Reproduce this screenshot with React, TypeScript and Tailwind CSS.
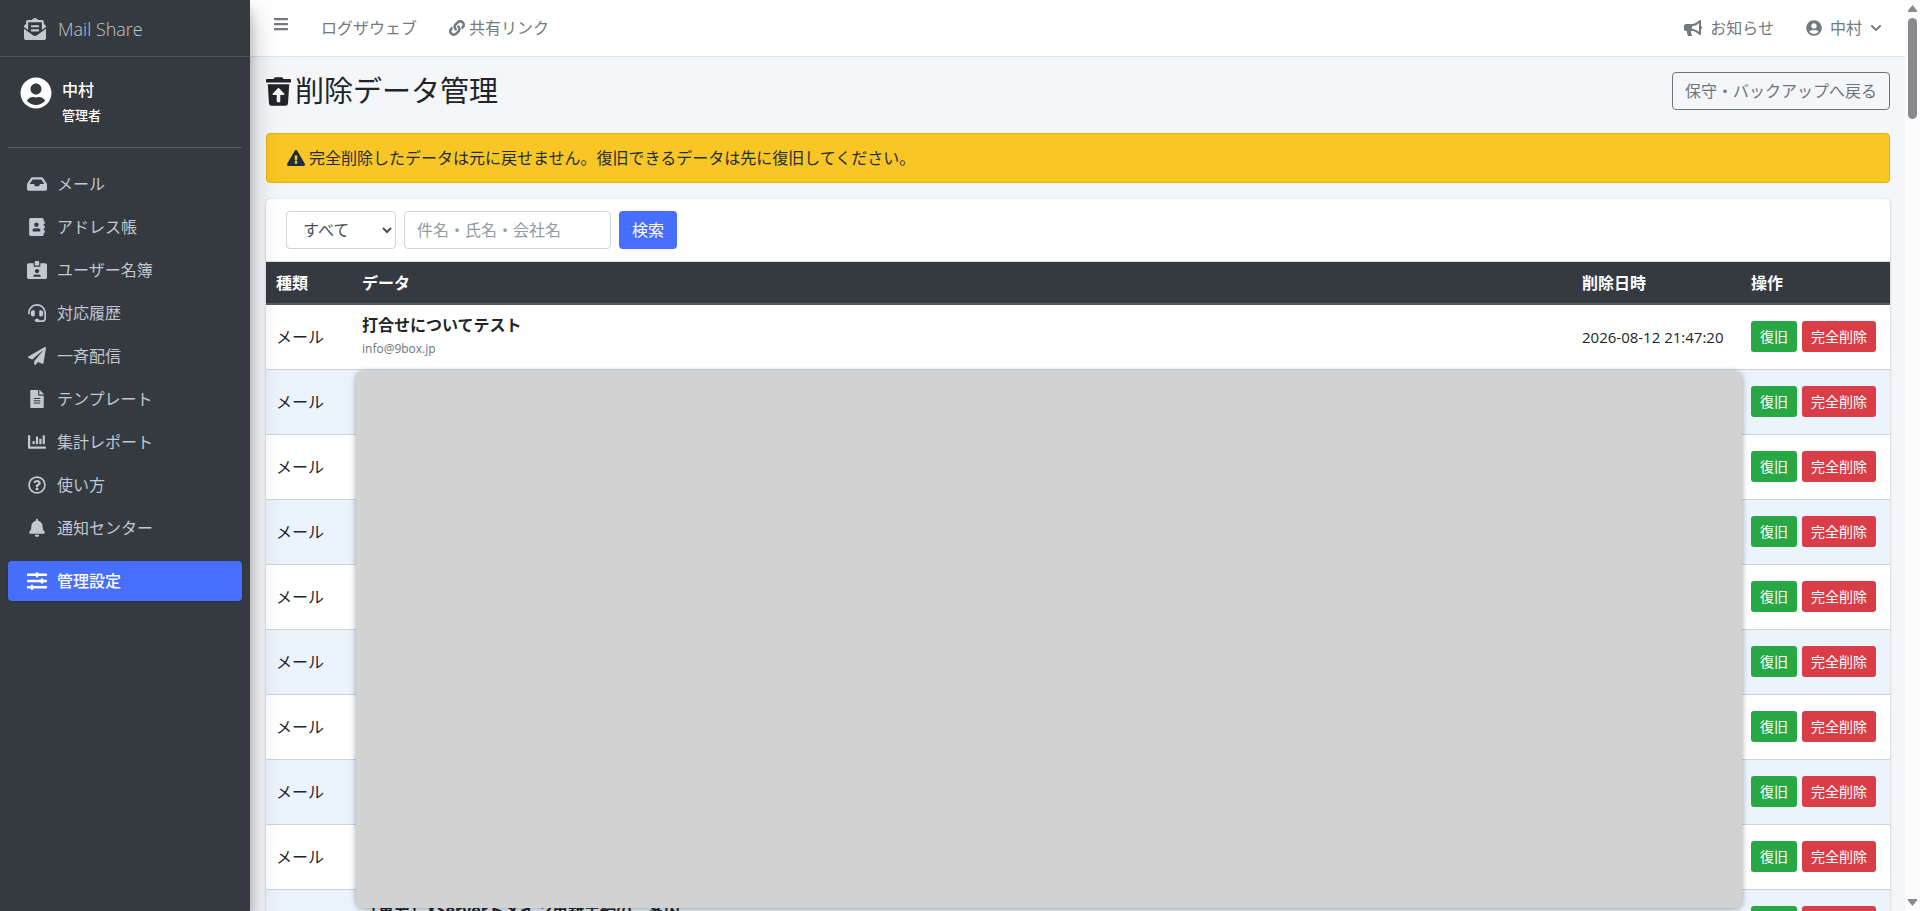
import React, { useState } from 'react'
import {
  FaAddressBook,
  FaBars,
  FaBell,
  FaBullhorn,
  FaChartBar,
  FaChevronDown,
  FaEnvelopeOpenText,
  FaExclamationTriangle,
  FaFileAlt,
  FaHeadset,
  FaIdCardAlt,
  FaInbox,
  FaLink,
  FaPaperPlane,
  FaRegQuestionCircle,
  FaSlidersH,
  FaTrashRestore,
  FaUserCircle,
} from 'react-icons/fa'

interface DeletedItem {
  id: number
  kind: string
  title: string
  address: string
  deletedAt: string
}

const menuItems = [
  { label: 'メール', icon: FaInbox },
  { label: 'アドレス帳', icon: FaAddressBook },
  { label: 'ユーザー名簿', icon: FaIdCardAlt },
  { label: '対応履歴', icon: FaHeadset },
  { label: '一斉配信', icon: FaPaperPlane },
  { label: 'テンプレート', icon: FaFileAlt },
  { label: '集計レポート', icon: FaChartBar },
  { label: '使い方', icon: FaRegQuestionCircle },
  { label: '通知センター', icon: FaBell },
]

const deletedItems: DeletedItem[] = [
  { id: 1, kind: 'メール', title: '打合せについてテスト', address: 'info@9box.jp', deletedAt: '2026-08-12 21:47:20' },
  ...[2, 3, 4, 5, 6, 7, 8, 9].map((id) => ({ id, kind: 'メール', title: '', address: '', deletedAt: '' })),
  { id: 10, kind: 'メール', title: '【重要】XServerドメイン更新手続のご案内', address: '', deletedAt: '' },
]

const Sidebar: React.FC = () => (
  <aside className="z-20 flex w-[250px] shrink-0 flex-col bg-[#343a40] text-[#c2c7d0] shadow-[0_14px_28px_rgba(0,0,0,0.25),0_10px_10px_rgba(0,0,0,0.22)]">
    <a href="#" className="flex h-[57px] items-center gap-3 border-b border-[#4b545c] pt-0.5 pl-6 text-lg font-light">
      <FaEnvelopeOpenText className="size-[22px]" />
      Mail Share
    </a>
    <div className="mx-2 flex h-[91px] gap-2.5 border-b border-[#4f5962] pt-5 pl-3 text-white">
      <FaUserCircle className="size-8" />
      <div className="flex flex-col font-medium">
        <span className="text-base leading-[26px]">中村</span>
        <span className="text-[13px] leading-6">管理者</span>
      </div>
    </div>
    <nav className="flex flex-col gap-[3px] px-2 pt-4">
      {menuItems.map(({ label, icon: Icon }) => (
        <a key={label} href="#" className="flex h-10 items-center gap-2.5 rounded pl-[19px] hover:bg-white/10">
          <Icon className="h-[18px] w-5" />
          {label}
        </a>
      ))}
      <a
        href="#"
        className="mt-2.5 flex h-10 items-center gap-2.5 rounded bg-[#466eff] pl-[19px] font-medium text-white shadow"
      >
        <FaSlidersH className="h-5 w-5" />
        管理設定
      </a>
    </nav>
  </aside>
)

const TopBar: React.FC = () => (
  <header className="flex h-[57px] shrink-0 items-center justify-between border-b border-[#dee2e6] bg-white px-[23px] text-[#75797d]">
    <div className="flex items-center">
      <button type="button" aria-label="メニュー" className="mr-8 mb-2">
        <FaBars className="size-4" />
      </button>
      <a href="#" className="mr-8">
        ログザウェブ
      </a>
      <a href="#" className="flex items-center gap-1">
        <FaLink className="size-4" />
        共有リンク
      </a>
    </div>
    <div className="flex items-center gap-8">
      <a href="#" className="flex items-center gap-2">
        <FaBullhorn className="size-[18px]" />
        お知らせ
      </a>
      <button type="button" className="flex items-center gap-2">
        <FaUserCircle className="size-4" />
        中村
        <FaChevronDown className="size-3" />
      </button>
    </div>
  </header>
)

const ScrollTrack: React.FC = () => (
  <div className="flex w-[15px] shrink-0 flex-col items-center justify-between bg-[#fcfcfc] py-1 text-[#8b8890]">
    <div className="flex flex-col items-center gap-1.5">
      <svg className="h-2 w-[9px]" viewBox="0 0 9 8" fill="currentColor">
        <path d="M4.5 1 9 6.5V8H0V6.500Z" />
      </svg>
      <div className="h-[101px] w-[9px] rounded-full bg-[#8b8890]" />
    </div>
    <svg className="h-2 w-[9px]" viewBox="0 0 9 8" fill="currentColor">
      <path d="M4.500 7 9 1.500V0H0V1.500Z" />
    </svg>
  </div>
)

const App: React.FC = () => {
  const [kind, setKind] = useState('all')
  const [keyword, setKeyword] = useState('')

  return (
    <div
      lang="ja"
      className="flex h-screen overflow-hidden bg-[#f4f6f9] font-['Open_Sans','Noto_Sans_CJK_JP',sans-serif] text-base text-[#212529]"
    >
      <Sidebar />
      <div className="flex min-w-0 flex-1 flex-col">
        <TopBar />
        <main className="min-h-0 flex-1 overflow-hidden pt-[15px] pr-[15px] pl-4">
          <div className="mb-[23px] flex items-start justify-between">
            <h1 className="flex items-center gap-1 text-[29px] leading-[38px] font-normal">
              <FaTrashRestore className="h-[29px] w-[25px]" />
              削除データ管理
            </h1>
            <button type="button" className="h-[38px] rounded border border-[#6c757d] px-3 text-[#6c757d]">
              保守・バックアップへ戻る
            </button>
          </div>

          <div
            role="alert"
            className="mb-4 flex h-[50px] items-center gap-1 rounded border border-[#edb100] bg-[#f8c625] px-5 text-[#1f2d3d]"
          >
            <FaExclamationTriangle className="size-[18px]" />
            完全削除したデータは元に戻せません。復旧できるデータは先に復旧してください。
          </div>

          <section className="rounded bg-white shadow-[0_0_1px_rgba(0,0,0,0.13),0_1px_3px_rgba(0,0,0,0.2)]">
            <form
              className="flex gap-2 border-b border-[#dfe0e1] px-5 py-3"
              onSubmit={(e) => e.preventDefault()}
            >
              <select
                aria-label="種類"
                value={kind}
                onChange={(e) => setKind(e.target.value)}
                className="h-[38px] w-[110px] rounded border border-[#ced4da] bg-white pl-3 text-[#495057]"
              >
                <option value="all">すべて</option>
                <option value="mail">メール</option>
              </select>
              <input
                type="text"
                aria-label="キーワード"
                placeholder="件名・氏名・会社名"
                value={keyword}
                onChange={(e) => setKeyword(e.target.value)}
                className="h-[38px] w-[207px] rounded border border-[#ced4da] px-3 placeholder:text-[#939ba2]"
              />
              <button type="submit" className="h-[38px] rounded bg-[#466eff] px-[13px] text-white">
                検索
              </button>
            </form>

            <div className="relative">
              <table className="w-full table-fixed border-collapse text-left">
                <thead className="bg-[#343a40] text-white">
                  <tr className="h-[42px] border-b-2 border-[#565b60]">
                    <th className="w-[86px] px-2.5">種類</th>
                    <th className="px-2.5">データ</th>
                    <th className="w-[169px] px-2.5">削除日時</th>
                    <th className="w-[149px] px-2.5">操作</th>
                  </tr>
                </thead>
                <tbody>
                  {deletedItems.map((item) => (
                    <tr key={item.id} className="h-[65px] border-b border-[#ced4da] even:bg-[#ebf3fc]">
                      <td className="px-2.5">{item.kind}</td>
                      <td className="px-2.5">
                        <div className="h-6 leading-6 font-bold">{item.title}</div>
                        <div className="h-6 text-xs leading-6 text-[#6c757d]">{item.address}</div>
                      </td>
                      <td className="px-2.5 text-[15px] whitespace-nowrap">{item.deletedAt}</td>
                      <td className="px-2.5">
                        <div className="flex gap-[5px] text-sm text-white">
                          <button type="button" className="h-[31px] rounded-[3px] bg-[#28a745] px-[9px]">
                            復旧
                          </button>
                          <button type="button" className="h-[31px] rounded-[3px] bg-[#d93d48] px-[9px]">
                            完全削除
                          </button>
                        </div>
                      </td>
                    </tr>
                  ))}
                </tbody>
              </table>
              {/* cover over the private rows */}
              <div className="absolute top-[109px] right-[148px] left-[90px] h-[537px] rounded-lg bg-[#d2d2d2] shadow-[0_1px_6px_rgba(0,0,0,0.35)]" />
            </div>
          </section>
        </main>
      </div>
      <ScrollTrack />
    </div>
  )
}

export default App
